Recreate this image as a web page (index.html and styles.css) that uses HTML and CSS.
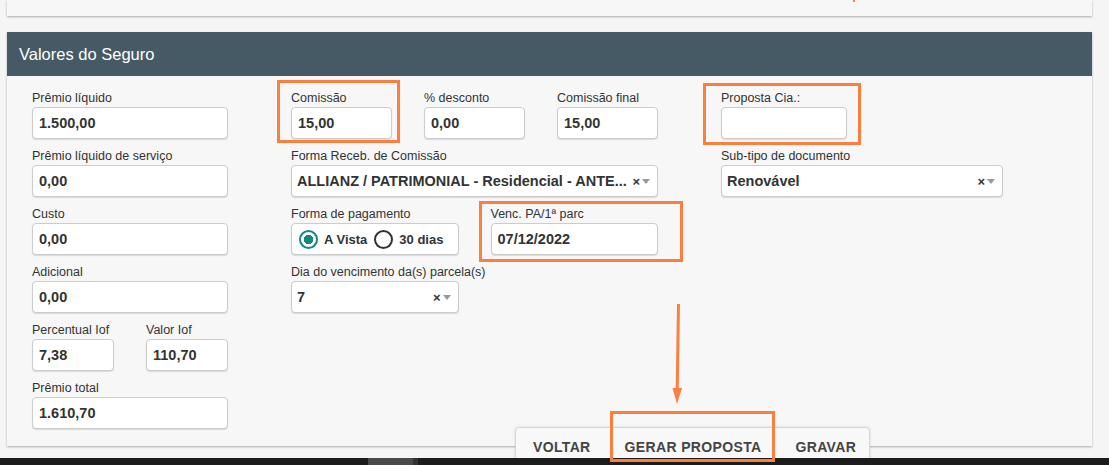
FILE: index.html
```html
<!DOCTYPE html>
<html lang="pt-BR">
<head>
    <meta charset="UTF-8">
    <title>Valores do Seguro</title>
    <meta name="viewport" content="width=device-width, initial-scale=1.0">
    <link rel="stylesheet" href="styles.css">
</head>
<body>
    <div class="page">
        <div class="card card-top"></div>

        <div class="card card-main">
            <div class="card-header">Valores do Seguro</div>
            <div class="card-body">
                <!-- coluna da esquerda -->
                <div class="col">
                    <div class="field">
                        <label>Prêmio líquido</label>
                        <input class="form-control" type="text" value="1.500,00">
                    </div>
                    <div class="field">
                        <label>Prêmio líquido de serviço</label>
                        <input class="form-control" type="text" value="0,00">
                    </div>
                    <div class="field">
                        <label>Custo</label>
                        <input class="form-control" type="text" value="0,00">
                    </div>
                    <div class="field">
                        <label>Adicional</label>
                        <input class="form-control" type="text" value="0,00">
                    </div>
                    <div class="row-2">
                        <div class="field">
                            <label>Percentual Iof</label>
                            <input class="form-control" type="text" value="7,38">
                        </div>
                        <div class="field">
                            <label>Valor Iof</label>
                            <input class="form-control" type="text" value="110,70">
                        </div>
                    </div>
                    <div class="field">
                        <label>Prêmio total</label>
                        <input class="form-control" type="text" value="1.610,70">
                    </div>
                </div>

                <!-- coluna do meio -->
                <div class="col">
                    <div class="row-3">
                        <div class="field">
                            <label>Comissão</label>
                            <input class="form-control" type="text" value="15,00">
                        </div>
                        <div class="field">
                            <label>% desconto</label>
                            <input class="form-control" type="text" value="0,00">
                        </div>
                        <div class="field">
                            <label>Comissão final</label>
                            <input class="form-control" type="text" value="15,00">
                        </div>
                    </div>
                    <div class="field">
                        <label>Forma Receb. de Comissão</label>
                        <div class="select">
                            <span class="select-text">ALLIANZ / PATRIMONIAL - Residencial - ANTE...</span>
                            <span class="select-clear">×</span>
                            <span class="select-arrow"></span>
                        </div>
                    </div>
                    <div class="row-2">
                        <div class="field">
                            <label>Forma de pagamento</label>
                            <div class="radio-group">
                                <span class="radio-option"><span class="radio checked"></span>A Vista</span>
                                <span class="radio-option"><span class="radio"></span>30 dias</span>
                            </div>
                        </div>
                        <div class="field">
                            <label>Venc. PA/1ª parc</label>
                            <input class="form-control" type="text" value="07/12/2022">
                        </div>
                    </div>
                    <div class="row-2">
                        <div class="field">
                            <label>Dia do vencimento da(s) parcela(s)</label>
                            <div class="select">
                                <span class="select-text">7</span>
                                <span class="select-clear">×</span>
                                <span class="select-arrow"></span>
                            </div>
                        </div>
                    </div>
                </div>

                <!-- coluna da direita -->
                <div class="col">
                    <div class="field field-short">
                        <label>Proposta Cia.:</label>
                        <input class="form-control" type="text" value="">
                    </div>
                    <div class="field">
                        <label>Sub-tipo de documento</label>
                        <div class="select">
                            <span class="select-text">Renovável</span>
                            <span class="select-clear">×</span>
                            <span class="select-arrow"></span>
                        </div>
                    </div>
                </div>
            </div>
        </div>
    </div>

    <div class="actions">
        <button>Voltar</button>
        <button>Gerar proposta</button>
        <button>Gravar</button>
    </div>

    <div class="taskbar"><span class="task-item"></span></div>

    <!-- marcações laranja do print -->
    <div class="mark mark-comissao"></div>
    <div class="mark mark-proposta"></div>
    <div class="mark mark-venc"></div>
    <div class="mark mark-gerar"></div>
    <div class="mark-dot"></div>
    <svg class="mark-arrow" width="16" height="106" viewBox="0 0 16 106">
        <line x1="8.5" y1="2" x2="7.2" y2="88" stroke="#fd7f3f" stroke-width="3"/>
        <polygon points="2.5,86 12,86 7,102" fill="#fd7f3f"/>
    </svg>
</body>
</html>
```

FILE: styles.css
```css
body {
    margin: 0;
    height: 465px;
    overflow: hidden;
    position: relative;
    background-color: #f5f5f5;
    font-family: "Liberation Sans", Arial, sans-serif;
    color: #333;
}
.page {
    padding: 0 17px 0 7px;
}
.card {
    background-color: #f7f7f7;
    box-shadow: 0 1px 2px rgba(0, 0, 0, 0.3);
}
.card-top {
    height: 16px;
}
.card-main {
    margin-top: 16px;
}
.card-header {
    height: 44px;
    line-height: 44px;
    padding-left: 12px;
    background-color: #465a65;
    color: #fff;
    font-size: 16.5px;
}
.card-body {
    display: grid;
    grid-template-columns: 196px 367px 282px;
    column-gap: 63px;
    align-items: start;
    padding: 15px 25px 17px;
}
.col {
    display: flex;
    flex-direction: column;
    gap: 10px;
}
.row-2 {
    display: grid;
    grid-template-columns: minmax(0, 1fr) minmax(0, 1fr);
    column-gap: 32px;
}
.row-3 {
    display: grid;
    grid-template-columns: minmax(0, 1fr) minmax(0, 1fr) minmax(0, 1fr);
    column-gap: 32px;
}
.field label {
    display: block;
    font-size: 12.5px;
    line-height: 14px;
    margin-bottom: 2px;
    color: #333;
    white-space: nowrap;
}
.form-control, .select, .radio-group {
    box-sizing: border-box;
    width: 100%;
    height: 32px;
    margin: 0;
    background-color: #fff;
    border: 1px solid #ccc;
    border-radius: 4px;
    box-shadow: 0 1px 1px rgba(0, 0, 0, 0.12);
}
.form-control {
    display: block;
    padding: 0 6px;
    font-family: inherit;
    font-size: 14.5px;
    font-weight: bold;
    color: #333;
    outline: none;
}
.field-short .form-control {
    width: 126px;
}
.select {
    display: flex;
    align-items: center;
    padding: 0 7px 0 5px;
    font-size: 14.5px;
    font-weight: bold;
}
.select-text {
    flex: 1;
    overflow: hidden;
    white-space: nowrap;
    text-overflow: ellipsis;
}
.select-clear {
    font-size: 13px;
    margin-right: 2px;
    color: #333;
}
.select-arrow {
    width: 0;
    height: 0;
    border-left: 4px solid transparent;
    border-right: 4px solid transparent;
    border-top: 5px solid #999;
}
.radio-group {
    display: flex;
    align-items: center;
    padding-left: 7px;
    gap: 7px;
    font-size: 13px;
    font-weight: bold;
}
.radio-option {
    display: flex;
    align-items: center;
    gap: 6px;
}
.radio {
    box-sizing: border-box;
    width: 19px;
    height: 19px;
    border: 2px solid #333;
    border-radius: 50%;
}
.radio.checked {
    border-color: #0f8a7e;
    background: radial-gradient(circle, #0f8a7e 0 4.5px, #fff 5px);
}
.actions {
    position: absolute;
    left: 515px;
    top: 427px;
    z-index: 1;
    display: flex;
    width: 355px;
    height: 40px;
    box-sizing: border-box;
    background-color: #f8f8f8;
    border: 1px solid #d6d6d6;
    border-radius: 4px 4px 0 0;
    box-shadow: 0 0 3px rgba(0, 0, 0, 0.12);
}
.actions button {
    padding: 0 17px;
    margin: 0;
    border: none;
    background: none;
    font-family: inherit;
    font-size: 14px;
    font-weight: bold;
    letter-spacing: 0.35px;
    text-transform: uppercase;
    color: #444;
    line-height: 38px;
    white-space: nowrap;
}
.taskbar {
    position: relative;
    z-index: 2;
    display: flex;
    height: 20px;
    margin-top: 12px;
    background-color: #1c1c1c;
}
.task-item {
    margin-left: 368px;
    width: 45px;
    background-color: #4a4a4a;
    border-right: 5px solid #333;
}
.mark {
    position: absolute;
    z-index: 3;
    box-sizing: border-box;
    border: 3px solid #fd7f3f;
}
.mark-comissao {
    left: 277px;
    top: 80px;
    width: 123px;
    height: 63px;
}
.mark-proposta {
    left: 703px;
    top: 83px;
    width: 158px;
    height: 62px;
}
.mark-venc {
    left: 479px;
    top: 201px;
    width: 204px;
    height: 61px;
}
.mark-gerar {
    left: 610px;
    top: 411px;
    width: 165px;
    height: 51px;
}
.mark-dot {
    position: absolute;
    left: 853px;
    top: 0;
    width: 2px;
    height: 2px;
    background-color: #fd7f3f;
}
.mark-arrow {
    position: absolute;
    z-index: 3;
    left: 670px;
    top: 302px;
}
```
